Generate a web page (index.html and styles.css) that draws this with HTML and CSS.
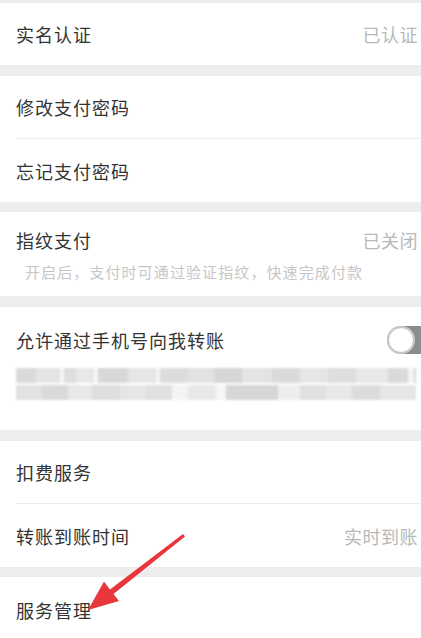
FILE: index.html
```html
<!DOCTYPE html>
<html lang="zh-CN">
<head>
<meta charset="utf-8">
<title>支付设置</title>
<link rel="stylesheet" href="styles.css">
</head>
<body>
<div class="page">
  <section class="group">
    <div class="row"><span class="label">实名认证</span><span class="value">已认证</span></div>
  </section>
  <section class="group g2">
    <div class="row"><span class="label">修改支付密码</span></div>
    <div class="divider"></div>
    <div class="row"><span class="label">忘记支付密码</span></div>
  </section>
  <section class="group g3">
    <div class="row tall">
      <div class="line"><span class="label">指纹支付</span><span class="value">已关闭</span></div>
      <div class="sub">开启后，支付时可通过验证指纹，快速完成付款</div>
    </div>
  </section>
  <section class="group g4">
    <div class="line phone"><span class="label">允许通过手机号向我转账</span><span class="toggle"><span class="knob"></span></span></div>
    <div class="mosaic">
      <div class="mline m1"></div>
      <div class="mline m2"></div>
    </div>
  </section>
  <section class="group g5">
    <div class="row"><span class="label">扣费服务</span></div>
    <div class="divider"></div>
    <div class="row"><span class="label">转账到账时间</span><span class="value">实时到账</span></div>
  </section>
  <section class="group g6">
    <div class="row last"><span class="label">服务管理</span></div>
  </section>
  <svg class="arrow" width="421" height="638" viewBox="0 0 421 638" aria-hidden="true">
    <polygon points="88,610 119,601 113.5,594 185,536.5 183,534 110,589.5 104,581.5" fill="#e8373c"/>
  </svg>
</div>
</body>
</html>
```
FILE: styles.css
```css
html, body {
  margin: 0;
  padding: 0;
}
body {
  background: #ededed;
  font-family: "Noto Sans CJK SC", "Noto Sans", sans-serif;
  overflow: hidden;
}
.page {
  position: relative;
  width: 421px;
  height: 638px;
  padding-top: 3px;
  box-sizing: border-box;
  display: flex;
  flex-direction: column;
  gap: 11px;
  overflow: hidden;
}
.group {
  background: #fff;
  flex-shrink: 0;
}
.g3 { margin-top: -1px; }
.g6 { margin-top: -1px; }
.row {
  height: 62px;
  padding: 0 3px 0 16px;
  display: flex;
  align-items: center;
  justify-content: space-between;
}
.g2 .row:last-child, .g5 .row:last-child {
  height: 63px;
}
.row.last {
  height: 66px;
}
.divider {
  height: 1px;
  margin-left: 16px;
  background: #ececec;
}
.label {
  font-size: 18px;
  color: #333;
  letter-spacing: 1px;
}
.value {
  font-size: 18px;
  color: #b8b8b8;
  letter-spacing: 0.5px;
}
.row.tall {
  height: 84px;
  flex-direction: column;
  align-items: stretch;
  justify-content: flex-start;
  padding-top: 13px;
  box-sizing: border-box;
}
.line {
  display: flex;
  align-items: center;
  justify-content: space-between;
  height: 30px;
}
.sub {
  margin-top: 6px;
  padding-left: 9px;
  font-size: 15px;
  color: #c6c6c6;
  letter-spacing: 1.1px;
}
.g4 {
  height: 123px;
  padding: 18px 0 0 16px;
  box-sizing: border-box;
  overflow: hidden;
}
.toggle {
  width: 54px;
  height: 28px;
  margin-right: -20px;
  border-radius: 14px;
  background: #8c8c8c;
  display: flex;
  align-items: center;
  padding-left: 1px;
  box-sizing: border-box;
}
.knob {
  width: 24px;
  height: 24px;
  border-radius: 50%;
  background: #fff;
  border: 1px solid #bdbdbd;
  box-shadow: 0 0 0 1px #d0d0d0;
}
.mosaic {
  margin-top: 13px;
  display: flex;
  flex-direction: column;
  gap: 2px;
  filter: blur(1.2px);
  width: 400px;
}
.mline {
  height: 15px;
}
.m1 {
  background: linear-gradient(to right,
    #dadada 0 20px, #e4e4e4 20px 44px, #f6f6f6 44px 48px, #dedede 48px 60px,
    #e8e8e8 60px 78px, #f6f6f6 78px 82px, #d8d8d8 82px 112px, #e6e6e6 112px 140px,
    #f4f4f4 140px 144px, #dcdcdc 144px 172px, #e2e2e2 172px 198px, #d6d6d6 198px 226px,
    #e4e4e4 226px 256px, #dadada 256px 284px, #e6e6e6 284px 312px, #dedede 312px 340px,
    #e8e8e8 340px 372px, #dadada 372px 392px, #f4f4f4 392px 398px, #d8d8d8 398px 400px);
}
.m2 {
  background: linear-gradient(to right,
    #e2e2e2 0 26px, #dadada 26px 52px, #e8e8e8 52px 76px, #dedede 76px 104px,
    #e6e6e6 104px 130px, #e0e0e0 130px 156px, #f4f4f4 156px 172px, #e8e8e8 172px 200px,
    #f6f6f6 200px 210px, #d6d6d6 210px 262px, #eeeeee 262px 284px, #e0e0e0 284px 310px,
    #e8e8e8 310px 336px, #dcdcdc 336px 364px, #e6e6e6 364px 400px);
}
.arrow {
  position: absolute;
  left: 0;
  top: 0;
  pointer-events: none;
}
```
